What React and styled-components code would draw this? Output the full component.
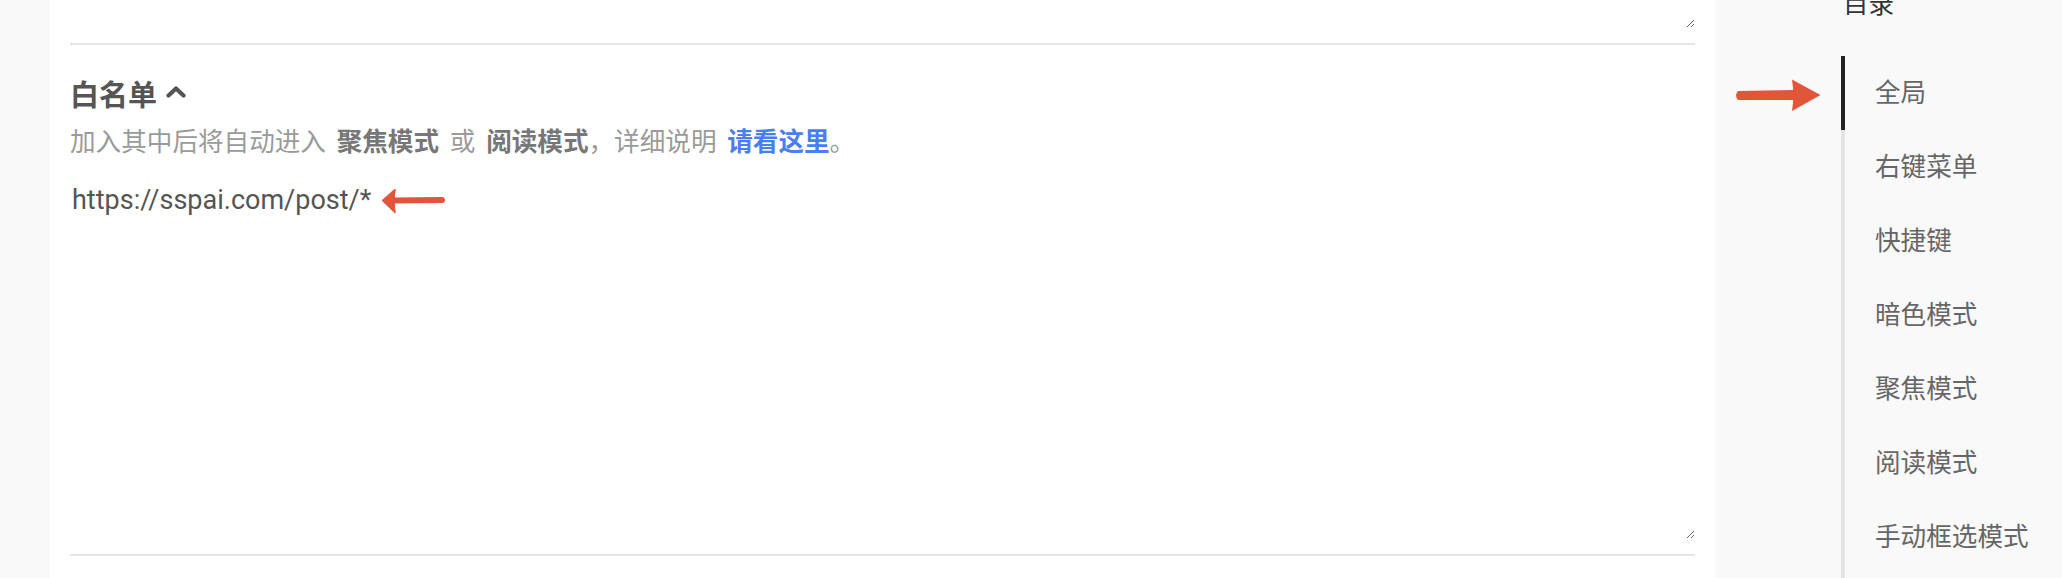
import React from "react";
import styled, { createGlobalStyle } from "styled-components";

const Global = createGlobalStyle`
  html, body { margin: 0; padding: 0; background: #f9f9f9; }
  body { font-family: "Noto Sans CJK SC", "Noto Sans", sans-serif; }
`;

const Page = styled.div`
  display: flex;
  height: 578px;
  overflow: hidden;
  background: #f9f9f9;
`;

const Gutter = styled.div`
  width: 50px;
  flex: none;
  background: #f9f9f9;
`;

const Main = styled.main`
  position: relative;
  width: 1665px;
  flex: none;
  background: #fff;
  padding: 0 20px;
  box-sizing: border-box;
  display: flex;
  flex-direction: column;
`;

const Field = styled.textarea`
  display: block;
  width: 100%;
  box-sizing: border-box;
  height: ${(p) => p.$h}px;
  margin: 0;
  padding: 0 0 0 2px;
  border: none;
  outline: none;
  resize: vertical;
  background: transparent;
  color: #555;
  font-family: Roboto, "Noto Sans CJK SC", sans-serif;
  font-size: 27px;
  line-height: 38px;
`;

const Divider = styled.div`
  height: 2px;
  background: #e6e6e6;
  margin-top: 15px;
  flex: none;
`;

const Section = styled.section`
  padding-top: 27px;
  display: flex;
  flex-direction: column;
`;

const Heading = styled.h3`
  margin: 0;
  display: flex;
  align-items: center;
  gap: 9px;
  font-size: 29px;
  line-height: 1.5;
  font-weight: 700;
  color: #555;
  svg { margin-top: -3px; }
`;

const Desc = styled.p`
  margin: 5px 0 22px;
  font-size: 25.6px;
  line-height: 1.5;
  word-spacing: 5px;
  color: #9a9a9a;
  b { color: #777; font-weight: 700; }
  a { color: #477ef0; font-weight: 700; text-decoration: none; }
`;

const Arrow = styled.svg`
  position: absolute;
  left: ${(p) => p.$x}px;
  top: ${(p) => p.$y}px;
`;

const Side = styled.aside`
  flex: 1;
  display: flex;
  flex-direction: column;
  background: #f9f9f9;
  padding-left: 126px;
`;

const SideTitle = styled.div`
  margin: -17px 0 35px 2px;
  font-size: 25.6px;
  line-height: 1.5;
  color: #333;
`;

const Nav = styled.ul`
  list-style: none;
  margin: 0;
  padding: 0;
  flex: 1;
  border-left: 4px solid #e4e4e4;
`;

const NavItem = styled.li`
  height: 74px;
  box-sizing: border-box;
  display: flex;
  align-items: center;
  margin-left: -4px;
  padding: 0 0 5px 30px;
  border-left: 4px solid ${(p) => (p.$active ? "#222" : "transparent")};
  font-size: 25.6px;
  color: #666;
`;

const Chevron = () => (
  <svg width="20" height="12" viewBox="0 0 20 12">
    <polyline
      points="2.5,9.5 10,2.5 17.5,9.5"
      fill="none"
      stroke="#555"
      strokeWidth="4.2"
      strokeLinecap="round"
      strokeLinejoin="round"
    />
  </svg>
);

const items = ["全局", "右键菜单", "快捷键", "暗色模式", "聚焦模式", "阅读模式", "手动框选模式"];

export default function App() {
  return (
    <>
      <Global />
      <Page>
        <Gutter />
        <Main>
          <Field $h={28} defaultValue="" aria-label="上一项" />
          <Divider />
          <Section>
            <Heading>
              白名单 <Chevron />
            </Heading>
            <Desc>
              加入其中后将自动进入 <b>聚焦模式</b> 或 <b>阅读模式</b>，详细说明 <a href="#">请看这里</a>。
            </Desc>
            <Field $h={358} defaultValue="https://sspai.com/post/*" aria-label="白名单" />
            <Divider />
          </Section>
          <Arrow $x={332} $y={188} width="64" height="26" viewBox="0 0 64 26">
            <line x1="10" y1="12.5" x2="60" y2="12" stroke="#e2553a" strokeWidth="6" strokeLinecap="round" />
            <path d="M0.5 12.5 L13 1.5 Q11 12.5 13 24.5 Z" fill="#e2553a" stroke="#e2553a" strokeWidth="1.5" strokeLinejoin="round" />
          </Arrow>
        </Main>
        <Side>
          <SideTitle>目录</SideTitle>
          <Nav>
            {items.map((t, i) => (
              <NavItem key={t} $active={i === 0}>
                {t}
              </NavItem>
            ))}
          </Nav>
        </Side>
        <Arrow $x={1734} $y={79} width="88" height="33" viewBox="0 0 88 33">
          <path d="M4 12 L60 11 L60 21 L4 21 Q0 16.5 4 12 Z" fill="#e2553a" />
          <path d="M58 0.5 L86.5 16 L58 32 Q60.5 16 58 0.5 Z" fill="#e2553a" />
        </Arrow>
      </Page>
    </>
  );
}
